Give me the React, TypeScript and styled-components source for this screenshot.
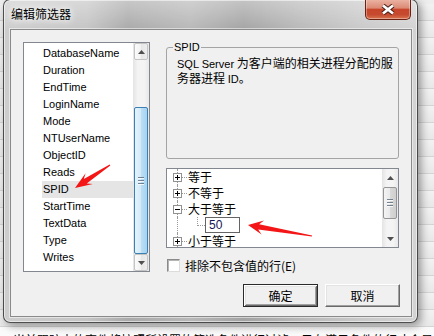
import React from "react";
import styled, { createGlobalStyle, css } from "styled-components";

const LATIN = `"Liberation Sans", "Noto Sans CJK SC", sans-serif`;
const CJK = `"Noto Sans CJK SC", "Liberation Sans", sans-serif`;

const fields = [
  "DatabaseName",
  "Duration",
  "EndTime",
  "LoginName",
  "Mode",
  "NTUserName",
  "ObjectID",
  "Reads",
  "SPID",
  "StartTime",
  "TextData",
  "Type",
  "Writes",
];

const operators = [
  { label: "等于", open: false },
  { label: "不等于", open: false },
  { label: "大于等于", open: true, value: "50" },
  { label: "小于等于", open: false },
];

// red annotation arrow, tail -> tip
const arrowPoints = (sx: number, sy: number, tx: number, ty: number, head = 15, wing = 7) => {
  const len = Math.hypot(tx - sx, ty - sy);
  const ux = (tx - sx) / len;
  const uy = (ty - sy) / len;
  const nx = -uy;
  const ny = ux;
  const at = (d: number, w: number) => [tx - ux * d + nx * w, ty - uy * d + ny * w];
  const pts = [
    [sx + nx * 0.6, sy + ny * 0.6],
    at(head * 0.72, 2.6),
    at(head, wing),
    [tx, ty],
    at(head, -wing),
    at(head * 0.72, -2.6),
    [sx - nx * 0.6, sy - ny * 0.6],
  ];
  return pts.map((p) => p.map((v) => v.toFixed(1)).join(",")).join(" ");
};

const App = () => {
  return (
    <>
      <GlobalStyle />
      <Desktop>
        <Backdrop>
          {Array.from({ length: 19 }).map((_, i) => (
            <BackRow key={i} />
          ))}
          <BackText>当前跟踪中的事件将按照所设置的筛选条件进行过滤，只有满足条件的行才会显示</BackText>
        </Backdrop>

        <Window>
          <TitleBar>
            <Title>编辑筛选器</Title>
            <CloseButton>
              <svg width="14" height="11" viewBox="0 0 14 11">
                <path d="M2 1.5 L12 9.5 M12 1.5 L2 9.5" stroke="#4a1d14" strokeWidth="4.6" />
                <path d="M2 1.5 L12 9.5 M12 1.5 L2 9.5" stroke="#fff" strokeWidth="2.8" />
              </svg>
            </CloseButton>
          </TitleBar>

          <Client>
            <MainRow>
              <ListBox>
                <ListItems>
                  {fields.map((f) => (
                    <ListItem key={f} $selected={f === "SPID"}>
                      {f}
                    </ListItem>
                  ))}
                </ListItems>
                <ScrollBar>
                  <ScrollButton $framed>
                    <ArrowGlyph dir="up" />
                  </ScrollButton>
                  <Track $align="flex-end">
                    <Thumb $size={147} $hot>
                      <Grip />
                    </Thumb>
                  </Track>
                  <ScrollButton $framed>
                    <ArrowGlyph dir="down" />
                  </ScrollButton>
                </ScrollBar>
              </ListBox>

              <RightColumn>
                <GroupBox>
                  <Legend>SPID</Legend>
                  <Description>
                    <Latin>SQL Server</Latin> 为客户端的相关进程分配的服务器进程 <Latin>ID</Latin>。
                  </Description>
                </GroupBox>

                <TreeBox>
                  <TreeBody>
                    {operators.map((op) => (
                      <React.Fragment key={op.label}>
                        <TreeRow>
                          <Expander $open={op.open} />
                          <Stub />
                          <TreeLabel>{op.label}</TreeLabel>
                        </TreeRow>
                        {op.value && (
                          <TreeRow $child>
                            <Elbow />
                            <EditBox>{op.value}</EditBox>
                          </TreeRow>
                        )}
                      </React.Fragment>
                    ))}
                  </TreeBody>
                  <ScrollBar>
                    <ScrollButton>
                      <ArrowGlyph dir="up" />
                    </ScrollButton>
                    <Track $align="flex-start">
                      <Thumb $size={32}>
                        <Grip />
                      </Thumb>
                    </Track>
                    <ScrollButton>
                      <ArrowGlyph dir="down" />
                    </ScrollButton>
                  </ScrollBar>
                </TreeBox>

                <CheckRow>
                  <CheckBox />
                  <CheckLabel>排除不包含值的行(E)</CheckLabel>
                </CheckRow>
              </RightColumn>
            </MainRow>

            <ButtonRow>
              <Button $default>确定</Button>
              <Button>取消</Button>
            </ButtonRow>
          </Client>
        </Window>

        <Annotations width="434" height="336" viewBox="0 0 434 336">
          <polygon points={arrowPoints(110, 165, 75, 188, 17, 6.5)} />
          <polygon points={arrowPoints(312, 236, 248, 225, 15, 7)} />
        </Annotations>
      </Desktop>
    </>
  );
};

const ArrowGlyph = ({ dir }: { dir: "up" | "down" }) => (
  <svg width="7" height="4" viewBox="0 0 7 4">
    <polygon points={dir === "up" ? "0,4 7,4 3.5,0" : "0,0 7,0 3.5,4"} fill="#4f4f4f" />
  </svg>
);

export default App;

const GlobalStyle = createGlobalStyle`
  html, body {
    margin: 0;
    padding: 0;
  }
  body {
    font-family: ${LATIN};
    font-size: 11px;
    color: #000;
    background: #ececec;
  }
  * {
    box-sizing: border-box;
  }
`;

const Desktop = styled.div`
  position: relative;
  width: 434px;
  height: 336px;
  overflow: hidden;
  background: #eeeeee;
`;

const Backdrop = styled.div`
  display: flex;
  flex-direction: column;
  height: 100%;
  padding-top: 4px;
`;

const BackRow = styled.div`
  flex: none;
  height: 17px;
  border-bottom: 1px solid #d4d4d4;
  background: linear-gradient(180deg, #f2f2f2, #e8e8e8);
`;

const BackText = styled.div`
  margin-top: auto;
  height: 13px;
  padding: 5px 0 0 13px;
  background: #fafafa;
  font: 12px/16px ${CJK};
  white-space: nowrap;
  overflow: hidden;
`;

const Window = styled.div`
  position: absolute;
  left: 3px;
  top: -1px;
  width: 415px;
  height: 324px;
  display: flex;
  flex-direction: column;
  padding: 0 5px 5px 6px;
  border: 1px solid rgba(30, 30, 30, 0.75);
  border-radius: 7px;
  background: linear-gradient(180deg, rgba(255, 255, 255, 0.35), rgba(255, 255, 255, 0) 30px),
    linear-gradient(
      90deg,
      #cdcdcd 0%,
      #c5c5c5 20%,
      #aaaaaa 30%,
      #b8b8b8 45%,
      #a4a4a4 58%,
      #b9b9b9 72%,
      #c9c9c9 86%,
      #d3d3d3 100%
    );
  box-shadow: 3px 3px 9px rgba(0, 0, 0, 0.38), inset 0 0 0 1px rgba(255, 255, 255, 0.55);
`;

const TitleBar = styled.div`
  flex: none;
  height: 29px;
  display: flex;
  align-items: flex-start;
  justify-content: space-between;
`;

const Title = styled.div`
  margin: 7px 0 0 1px;
  font: 12px/14px ${CJK};
  color: #000;
  text-shadow: 0 0 6px #fff, 0 0 10px rgba(255, 255, 255, 0.9);
`;

const CloseButton = styled.div`
  width: 46px;
  height: 21px;
  margin: -1px 1px 0 0;
  display: flex;
  align-items: center;
  justify-content: center;
  border: 1px solid #6b2012;
  border-top: none;
  border-radius: 0 0 5px 5px;
  background: linear-gradient(180deg, #ecb6a7 0%, #dc8a74 45%, #c8462b 52%, #c54a2f 78%, #d9744f 100%);
  box-shadow: inset 0 0 0 1px rgba(255, 255, 255, 0.35);
`;

const Client = styled.div`
  flex: 1;
  display: flex;
  flex-direction: column;
  padding: 12px 12px 9px 12px;
  border: 1px solid #8a8a8a;
  background: #f0f0f0;
  box-shadow: 0 0 0 1px rgba(255, 255, 255, 0.5);
`;

const MainRow = styled.div`
  display: flex;
  gap: 16px;
  height: 230px;
`;

const ListBox = styled.div`
  flex: none;
  width: 127px;
  height: 230px;
  display: flex;
  border: 1px solid #828790;
  background: #fff;
`;

const ListItems = styled.ul`
  flex: 1;
  margin: 0;
  padding: 2px 0 0 18px;
  list-style: none;
  overflow: hidden;
`;

const ListItem = styled.li<{ $selected?: boolean }>`
  height: 17px;
  padding-left: 1px;
  font: 11px/17px ${LATIN};
  white-space: nowrap;
  background: ${(p) => (p.$selected ? "#e5e5e5" : "transparent")};
`;

const ScrollBar = styled.div`
  flex: none;
  width: 16px;
  display: flex;
  flex-direction: column;
  background: linear-gradient(90deg, #e4e4e4, #f4f4f4 30%, #f4f4f4 70%, #e8e8e8);
`;

const ScrollButton = styled.div<{ $framed?: boolean }>`
  flex: none;
  height: 17px;
  display: flex;
  align-items: center;
  justify-content: center;
  ${(p) =>
    p.$framed &&
    css`
      margin: 0 1px;
      border: 1px solid #c4c4c4;
      border-radius: 2px;
      background: linear-gradient(90deg, #fbfbfb, #f1f1f1 50%, #e6e6e6 50%, #ededed);
    `}
`;

const Track = styled.div<{ $align: string }>`
  flex: 1;
  display: flex;
  flex-direction: column;
  justify-content: ${(p) => p.$align};
  padding: 1px 1px 0;
`;

const Thumb = styled.div<{ $size: number; $hot?: boolean }>`
  height: ${(p) => p.$size}px;
  display: flex;
  align-items: center;
  justify-content: center;
  border: 1px solid #959595;
  border-radius: 2px;
  background: linear-gradient(90deg, #f4f4f4, #e9e9e9 50%, #d9d9d9 50%, #cfcfcf);
  ${(p) =>
    p.$hot &&
    css`
      border-color: #3c7fb1;
      background: linear-gradient(90deg, #e6f3fc, #d2eaf9 50%, #bcdff5 50%, #a7d2f0);
    `}
`;

const Grip = styled.div`
  width: 6px;
  height: 8px;
  background: repeating-linear-gradient(180deg, #5a6a7a 0 1px, #ffffff 1px 2px, transparent 2px 3px);
  opacity: 0.8;
`;

const RightColumn = styled.div`
  flex: none;
  width: 233px;
  display: flex;
  flex-direction: column;
`;

const GroupBox = styled.fieldset`
  height: 117px;
  min-width: 0;
  margin: 0;
  padding: 3px 2px 0 10px;
  border: 1px solid #a4a4a4;
  border-radius: 3px;
`;

const Legend = styled.legend`
  margin-left: -4px;
  padding: 0 1px;
  font: 11px/11px ${LATIN};
`;

const Description = styled.div`
  font: 12px/13px ${CJK};
`;

const Latin = styled.span`
  font-family: ${LATIN};
  font-size: 11px;
`;

const TreeBox = styled.div`
  flex: none;
  height: 80px;
  margin-top: 9px;
  display: flex;
  border: 1px solid #828790;
  background: #fff;
`;

const TreeBody = styled.div`
  flex: 1;
  display: flex;
  flex-direction: column;
  overflow: hidden;
`;

const TreeRow = styled.div<{ $child?: boolean }>`
  position: relative;
  flex: none;
  height: 16px;
  display: flex;
  align-items: center;
  padding-left: ${(p) => (p.$child ? 30 : 6)}px;

  &::before {
    content: "";
    position: absolute;
    left: 10px;
    top: 0;
    bottom: 0;
    border-left: 1px dotted #9a9a9a;
  }
`;

const Expander = styled.span<{ $open: boolean }>`
  position: relative;
  z-index: 1;
  flex: none;
  width: 9px;
  height: 9px;
  border: 1px solid #919191;
  background: #fff;

  &::before {
    content: "";
    position: absolute;
    left: 1px;
    top: 3px;
    width: 5px;
    height: 1px;
    background: #000;
  }

  ${(p) =>
    !p.$open &&
    css`
      &::after {
        content: "";
        position: absolute;
        left: 3px;
        top: 1px;
        width: 1px;
        height: 5px;
        background: #000;
      }
    `}
`;

const Stub = styled.span`
  flex: none;
  width: 5px;
  border-top: 1px dotted #9a9a9a;
`;

const TreeLabel = styled.span`
  padding: 0 1px;
  font: 12px/16px ${CJK};
  white-space: nowrap;
`;

const Elbow = styled.span`
  flex: none;
  align-self: flex-start;
  width: 8px;
  height: 9px;
  border-left: 1px dotted #9a9a9a;
  border-bottom: 1px dotted #9a9a9a;
`;

const EditBox = styled.span`
  flex: none;
  width: 35px;
  height: 16px;
  padding-left: 3px;
  border: 1px solid #646464;
  background: #fff;
  font: 12px/14px ${LATIN};
  color: #14145a;
`;

const CheckRow = styled.div`
  flex: none;
  height: 13px;
  margin-top: 11px;
  display: flex;
  align-items: center;
  gap: 5px;
`;

const CheckBox = styled.span`
  flex: none;
  width: 13px;
  height: 13px;
  margin-left: 1px;
  border: 1px solid;
  border-color: #8a8a8a #dcdcdc #dcdcdc #8a8a8a;
  background: #fff;
  box-shadow: inset 1px 1px #b4b4b4;
`;

const CheckLabel = styled.span`
  font: 12px/14px ${CJK};
  white-space: nowrap;
`;

const ButtonRow = styled.div`
  margin: 12px -1px 0 0;
  display: flex;
  justify-content: flex-end;
  gap: 7px;
`;

const Button = styled.button<{ $default?: boolean }>`
  width: 75px;
  height: 23px;
  padding: 0;
  font: 12px/1 ${CJK};
  color: #000;
  background: #f0f0f0;
  border: 1px solid;
  border-color: #fff #696969 #696969 #fff;
  box-shadow: inset -1px -1px #a0a0a0, inset 1px 1px #e3e3e3;

  ${(p) =>
    p.$default &&
    css`
      border: 1px solid #2a2a2a;
      box-shadow: inset 1px 1px #fff, inset -1px -1px #696969, inset 2px 2px #e3e3e3, inset -2px -2px #a0a0a0;
    `}
`;

const Annotations = styled.svg`
  position: absolute;
  left: 0;
  top: 0;
  pointer-events: none;
  fill: #f41616;
`;
